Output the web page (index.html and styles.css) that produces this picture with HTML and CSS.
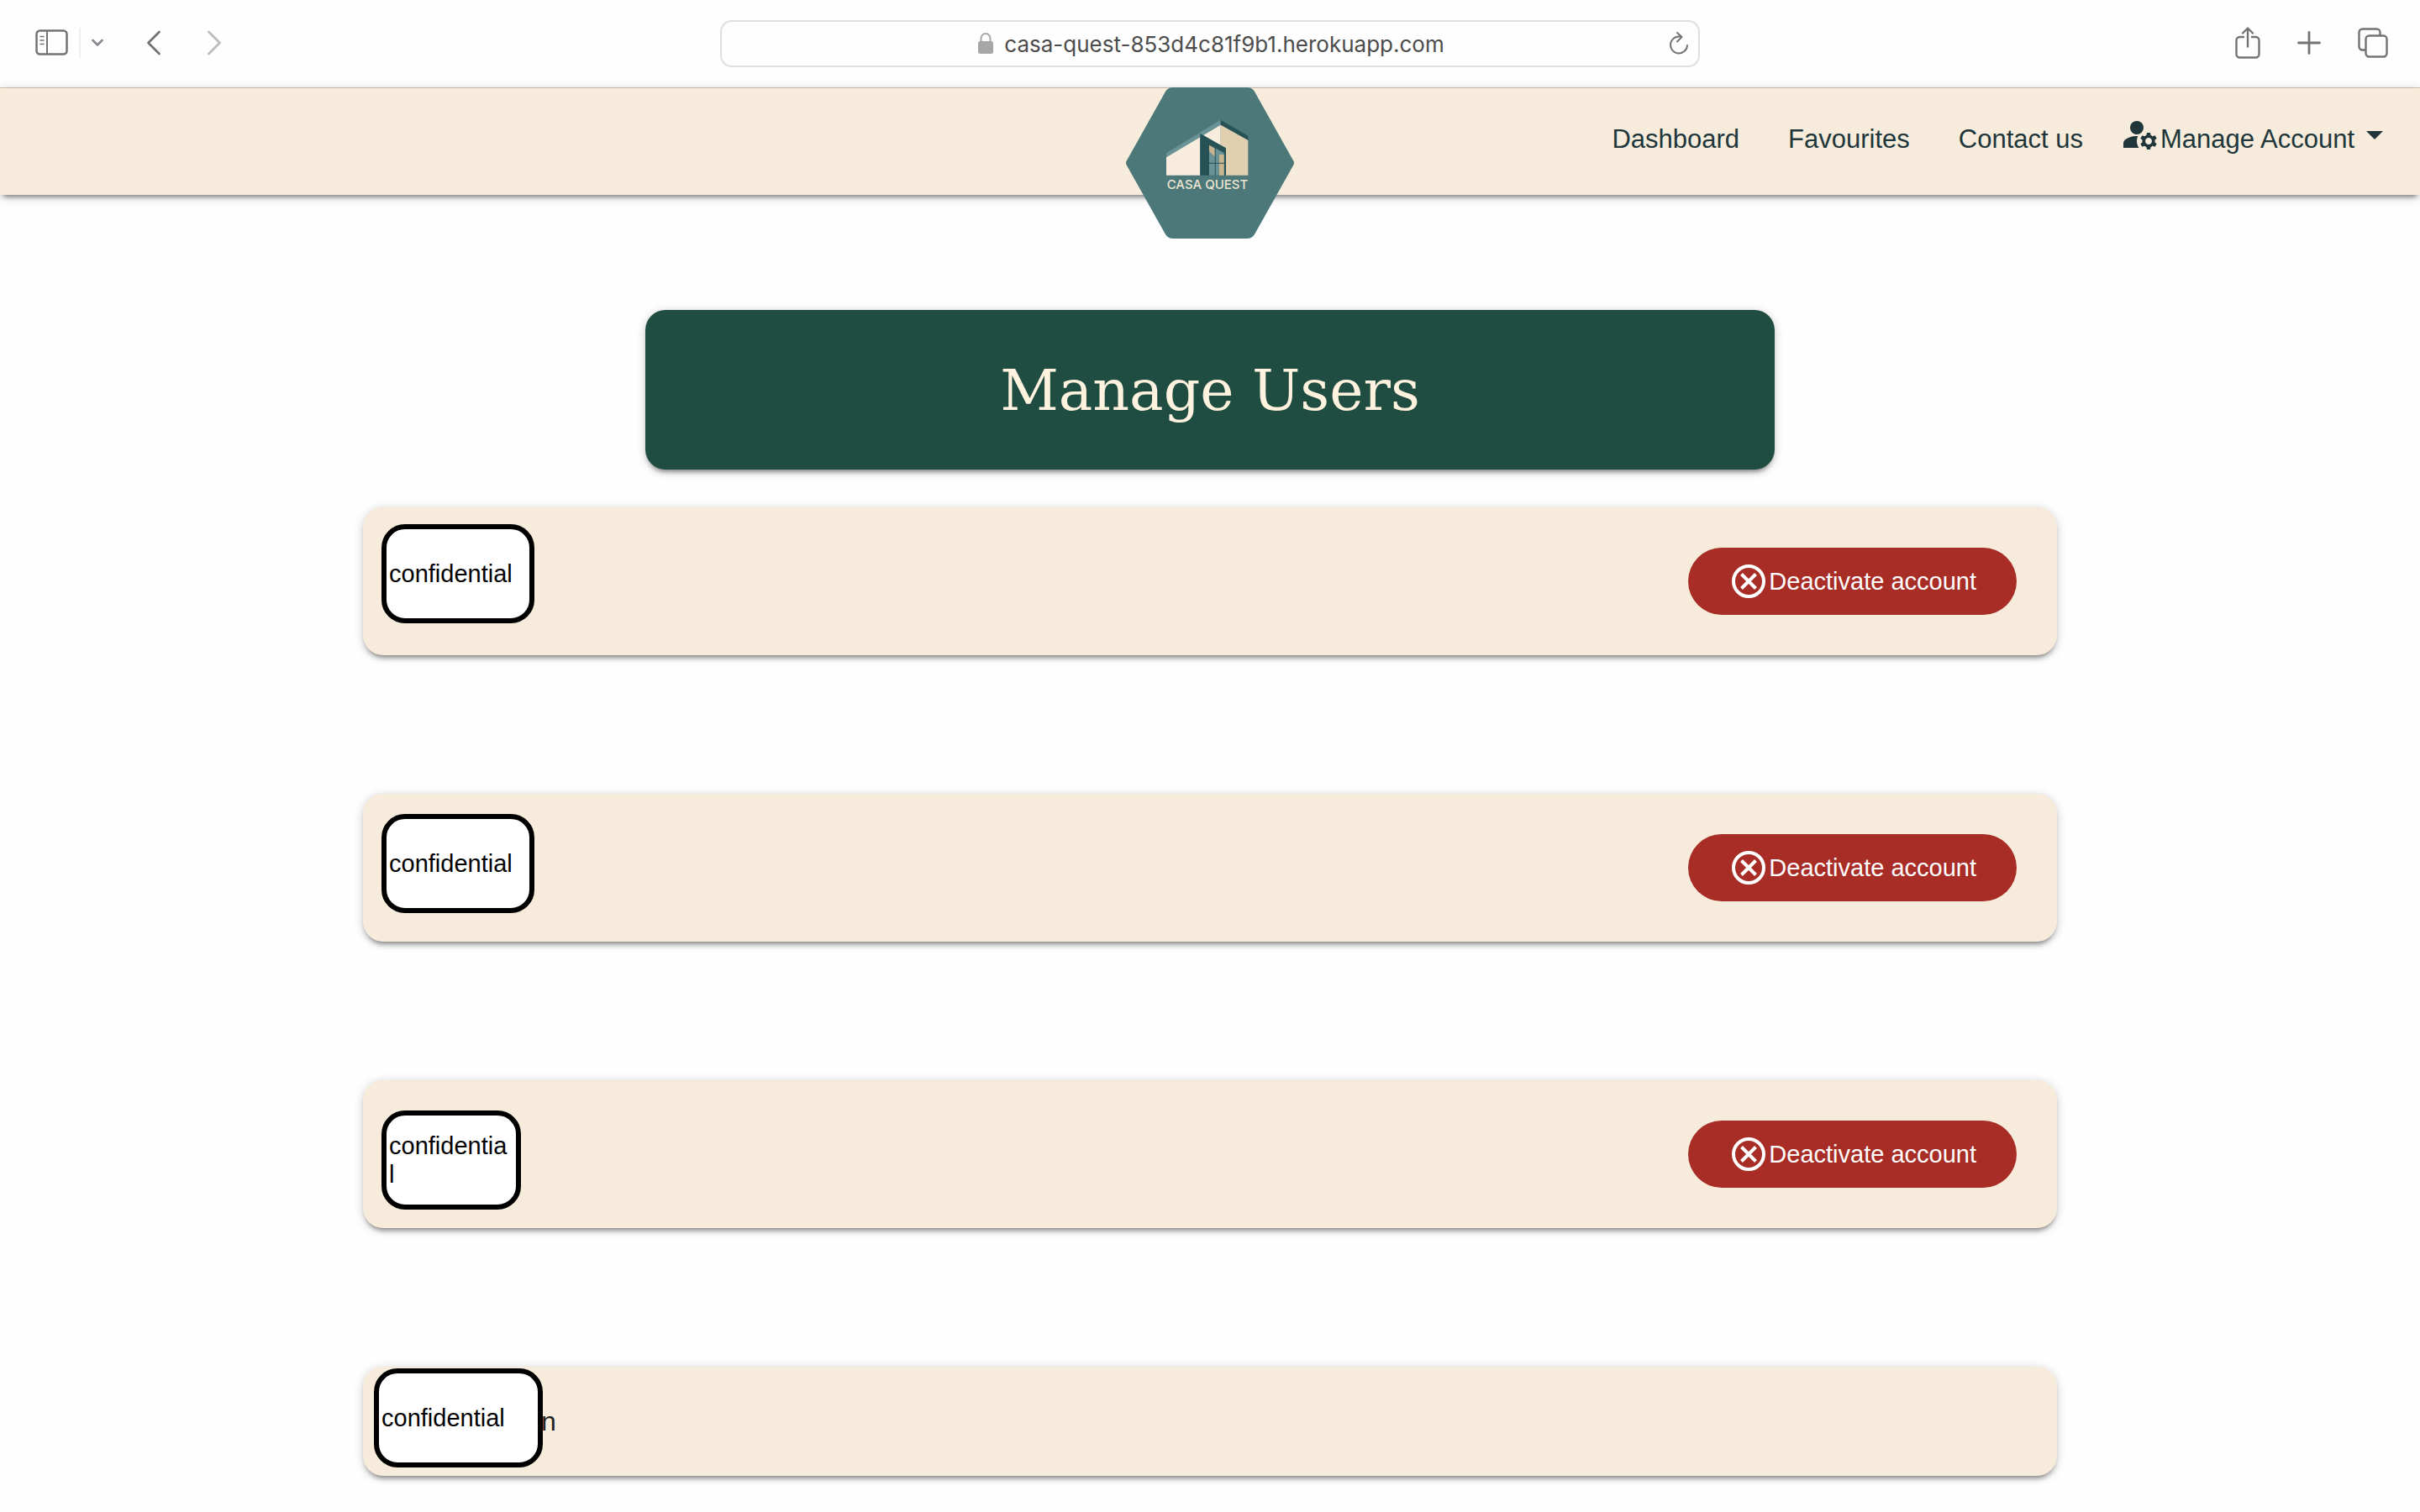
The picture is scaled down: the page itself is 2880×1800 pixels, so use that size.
FILE: index.html
```html
<!DOCTYPE html>
<html lang="en">
<head>
<meta charset="utf-8">
<meta name="viewport" content="width=device-width, initial-scale=1">
<title>Casa Quest - Manage Users</title>
<link rel="stylesheet" href="styles.css">
</head>
<body>
<div class="browser">
  <div class="tools tools-left">
    <button class="tool" aria-label="Sidebar"><svg width="40" height="32" viewBox="0 0 40 32"><rect x="1.5" y="1.5" width="36" height="28" rx="4" fill="none" stroke="currentColor" stroke-width="2.5"/><path d="M14 2v28" stroke="currentColor" stroke-width="2"/><path d="M6 8.500h4M6 13h4M6 17.500h4" stroke="currentColor" stroke-width="1.500" stroke-linecap="round"/></svg></button>
    <span class="divider"></span>
    <button class="tool tool-menu" aria-label="Tab groups"><svg width="16" height="12" viewBox="0 0 16 12"><path d="M2.500 3l5.500 5.500L13.500 3" fill="none" stroke="currentColor" stroke-width="2.800" stroke-linecap="round" stroke-linejoin="round"/></svg></button>
    <button class="tool tool-back" aria-label="Back"><svg width="18" height="32" viewBox="0 0 18 32"><path d="M15.500 3L2.500 16l13 13" fill="none" stroke="currentColor" stroke-width="2.800" stroke-linecap="round" stroke-linejoin="round"/></svg></button>
    <button class="tool tool-forward" aria-label="Forward"><svg width="18" height="32" viewBox="0 0 18 32"><path d="M2.500 3l13 13-13 13" fill="none" stroke="currentColor" stroke-width="2.800" stroke-linecap="round" stroke-linejoin="round"/></svg></button>
  </div>
  <div class="address">
    <span class="site">
      <svg class="lock" width="20" height="28" viewBox="0 0 20 28"><rect x="1" y="11" width="18" height="15" rx="2.500" fill="currentColor"/><path d="M4.500 12V7.500a5.500 5.500 0 0 1 11 0V12" fill="none" stroke="currentColor" stroke-width="2"/></svg>
      <span>casa-quest-853d4c81f9b1.herokuapp.com</span>
    </span>
    <button class="tool reload" aria-label="Reload"><svg width="24" height="30" viewBox="0 0 24 30"><path d="M13 6.500h-1A10 10 0 1 0 22 17M10 2l5.500 5L10 12.500" fill="none" stroke="currentColor" stroke-width="2" stroke-linecap="round" stroke-linejoin="round"/></svg></button>
  </div>
  <div class="tools tools-right">
    <button class="tool" aria-label="Share"><svg width="30" height="38" viewBox="0 0 30 38"><path d="M10 12H5.500a4 4 0 0 0-4 4v16.500a4 4 0 0 0 4 4h19a4 4 0 0 0 4-4V16a4 4 0 0 0-4-4H20M15 23.500V2M9 7.500L15 1.500l6 6" fill="none" stroke="currentColor" stroke-width="2.400" stroke-linecap="round" stroke-linejoin="round"/></svg></button>
    <button class="tool" aria-label="New tab"><svg width="28" height="28" viewBox="0 0 28 28"><path d="M14 1.500v25M1.500 14h25" stroke="currentColor" stroke-width="2.800" stroke-linecap="round"/></svg></button>
    <button class="tool" aria-label="Tab overview"><svg width="36" height="36" viewBox="0 0 36 36"><g fill="none" stroke="currentColor" stroke-width="2.400"><rect x="9.500" y="9.500" width="25" height="25" rx="4"/><path d="M9 26.500H5.500a4 4 0 0 1-4-4v-17a4 4 0 0 1 4-4h17a4 4 0 0 1 4 4V9"/></g></svg></button>
  </div>
</div>

<header class="navbar">
  <a class="logo" href="#" aria-label="Casa Quest home">
    <svg width="200" height="180" viewBox="0 0 200 180">
      <path d="M56 0h88q6 0 9 5l46 82q2 3 0 6l-46 82q-3 5-9 5H56q-6 0-9-5L1 93q-2-3 0-6L47 5q3-5 9-5z" fill="#4c787a"/>
      <path d="M48 78.300L112.700 38.700v6L48 83.300z" fill="#6a9397"/>
      <path d="M112.700 38.700l32.600 19V63l-32.600-18.300z" fill="#265255"/>
      <path d="M48 83.300l40.300-24.100v45.500H48zM92 57l20.700-12.300v24.500z" fill="#f7ecdd"/>
      <path d="M112.700 44.700L145.300 63v41.700h-27V72l-5.600-3z" fill="#e0d0af"/>
      <path d="M88.300 55L119 72.300v32.400H88.300z" fill="#265255"/>
      <path d="M99 68.500l17.700 9.500v26.700H99z" fill="#6a9397"/>
      <path d="M99 69l6.700 4v9.500L99 76zM111 80h5.700v24.700H111z" fill="#c9b48f"/>
      <path d="M106.300 72v32.700M99 90.300h18" stroke="#265255" stroke-width="1"/>
      <text x="97" y="121" text-anchor="middle" class="logo-name">CASA QUEST</text>
    </svg>
  </a>
  <nav class="menu">
    <a href="#">Dashboard</a>
    <a href="#">Favourites</a>
    <a href="#">Contact us</a>
    <button class="account">
      <svg class="account-icon" width="48" height="48" viewBox="0 0 24 24" fill="currentColor"><circle cx="10" cy="8" r="4"/><path d="M10.670 13.020C10.450 13.010 10.230 13 10 13c-2.420 0-4.680.670-6.610 1.820C2.510 15.340 2 16.320 2 17.350V20h9.260C10.470 18.870 10 17.490 10 16c0-1.070.250-2.070.670-2.980z"/><path d="M20.750 16c0-.220-.030-.420-.060-.630l1.140-1.010-1-1.730-1.450.490c-.320-.270-.680-.480-1.080-.630L18 11h-2l-.300 1.490c-.400.150-.760.360-1.080.630l-1.450-.490-1 1.730 1.140 1.010c-.030.210-.060.410-.060.630s.030.420.060.630l-1.140 1.010 1 1.730 1.450-.490c.320.270.680.480 1.080.630L16 21h2l.300-1.490c.400-.150.760-.360 1.080-.630l1.450.490 1-1.730-1.140-1.010c.030-.210.060-.410.060-.630zM17 18c-1.100 0-2-.900-2-2s.900-2 2-2 2 .900 2 2-.900 2-2 2z"/></svg>
      <span>Manage Account</span>
      <svg class="caret" width="20" height="28" viewBox="0 0 20 28"><path d="M0 4h20L10 14z" fill="currentColor"/></svg>
    </button>
  </nav>
</header>

<main class="page">
  <h1 class="title">Manage Users</h1>
  <ul class="users">
    <li class="user">
      <span class="redacted redacted-high">confidential</span>
      <button class="deactivate"><svg width="40" height="40" viewBox="0 0 40 40"><circle cx="20" cy="20" r="18" fill="none" stroke="currentColor" stroke-width="4"/><path d="M11.500 11.500l17 17M28.500 11.500l-17 17" stroke="currentColor" stroke-width="4"/></svg>Deactivate account</button>
    </li>
    <li class="user">
      <span class="redacted">confidential</span>
      <button class="deactivate"><svg width="40" height="40" viewBox="0 0 40 40"><circle cx="20" cy="20" r="18" fill="none" stroke="currentColor" stroke-width="4"/><path d="M11.500 11.500l17 17M28.500 11.500l-17 17" stroke="currentColor" stroke-width="4"/></svg>Deactivate account</button>
    </li>
    <li class="user">
      <span class="redacted redacted-narrow">confidential</span>
      <button class="deactivate"><svg width="40" height="40" viewBox="0 0 40 40"><circle cx="20" cy="20" r="18" fill="none" stroke="currentColor" stroke-width="4"/><path d="M11.500 11.500l17 17M28.500 11.500l-17 17" stroke="currentColor" stroke-width="4"/></svg>Deactivate account</button>
    </li>
    <li class="user user-admin">
      <span class="redacted redacted-wide">confidential</span>
      <span class="name">n</span>
    </li>
  </ul>
</main>
</body>
</html>
```
FILE: styles.css
```css
:root {
  --cream: #f7ecdb;
  --ink: #20363b;
  --shadow: 0 2px 12px rgba(0, 0, 0, 0.2), 0 6px 6px -4px rgba(0, 0, 0, 0.45);
}

* {
  box-sizing: border-box;
}

body {
  min-height: 100vh;
  margin: 0;
  background: #fefefe;
  font-family: "Liberation Sans", Arial, sans-serif;
  color: var(--ink);
}

button {
  padding: 0;
  border: 0;
  background: none;
  color: inherit;
  font: inherit;
  cursor: pointer;
}

svg {
  display: block;
  flex: none;
}

/* Browser toolbar */
.browser {
  display: grid;
  grid-template-columns: 1fr minmax(0, 1166px) 1fr;
  align-items: center;
  height: 105px;
  border-bottom: 1px solid #cfc5ae;
  color: #737373;
}

.tools {
  display: flex;
  align-items: center;
  padding-bottom: 2px;
}

.tools-left {
  padding-left: 42px;
}

.divider {
  width: 2px;
  height: 36px;
  margin: 0 12px;
  background: #efefef;
}

.tool-menu {
  color: #8a8a90;
}

.tool-back {
  margin-left: 50px;
}

.tool-forward {
  margin-left: 54px;
  color: #bdbdbd;
}

.tools-right {
  justify-content: flex-end;
  gap: 44px;
  padding-right: 38px;
}

.address {
  display: flex;
  align-items: center;
  height: 56px;
  padding: 0 11px;
  border: 2px solid #dfdfdf;
  border-radius: 14px;
}

.site {
  display: flex;
  flex: 1;
  align-items: center;
  justify-content: center;
  gap: 12px;
  padding-left: 26px;
  color: #4c4c4c;
  font-family: Inter, sans-serif;
  font-size: 26px;
}

.lock {
  color: #a6a6a6;
}

/* Site navigation */
.navbar {
  position: relative;
  display: flex;
  justify-content: flex-end;
  height: 127px;
  padding: 0 44px;
  background: var(--cream);
  box-shadow: var(--shadow);
}

.logo {
  position: absolute;
  top: -1px;
  left: 50%;
  margin-left: -100px;
}

.logo-name {
  fill: #efe6d2;
  font-family: Inter, sans-serif;
  font-size: 15px;
  font-weight: 500;
}

.menu {
  display: flex;
  align-items: center;
  gap: 58px;
  height: 121px;
  font-size: 31px;
}

.menu a {
  color: inherit;
  text-decoration: none;
}

.account {
  display: flex;
  align-items: center;
  margin-left: -14px;
}

.account-icon {
  margin-bottom: 12px;
}

.caret {
  margin-left: 14px;
}

/* Page content */
.page {
  width: 70%;
  margin: 137px auto 0;
  padding-bottom: 43px;
}

.title {
  display: flex;
  align-items: center;
  justify-content: center;
  width: 66.667%;
  height: 190px;
  margin: 0 auto 45px;
  border-radius: 24px;
  background: #204d41;
  box-shadow: var(--shadow);
  color: #fff2df;
  font-family: "DejaVu Serif", serif;
  font-size: 68px;
  font-weight: 400;
}

.users {
  display: flex;
  flex-direction: column;
  gap: 165px;
  margin: 0;
  padding: 0;
  list-style: none;
}

.user {
  position: relative;
  display: flex;
  align-items: center;
  justify-content: flex-end;
  min-height: 176px;
  padding: 0 48px;
  border-radius: 24px;
  background: var(--cream);
  box-shadow: var(--shadow);
}

.user-admin {
  justify-content: flex-start;
  min-height: 130px;
  padding-left: 212px;
}

/* Opaque label laid over a user's details */
.redacted {
  position: absolute;
  top: 24px;
  left: 22px;
  display: flex;
  align-items: center;
  width: 182px;
  height: 118px;
  padding: 0 6px 0 3px;
  border: 6px solid #000;
  border-radius: 28px;
  background: #fff;
  color: #000;
  font-size: 29px;
  line-height: 34px;
  word-break: break-all;
}

.redacted-high {
  top: 20px;
}

.redacted-narrow {
  top: 36px;
  width: 166px;
}

.redacted-wide {
  top: 2px;
  left: 13px;
  width: 201px;
}

.name {
  color: #222;
  font-size: 32px;
}

.deactivate {
  display: flex;
  align-items: center;
  gap: 4px;
  height: 80px;
  padding: 0 48px 0 52px;
  border-radius: 40px;
  background: #a72d26;
  color: #fff;
  font-size: 29px;
}
```
